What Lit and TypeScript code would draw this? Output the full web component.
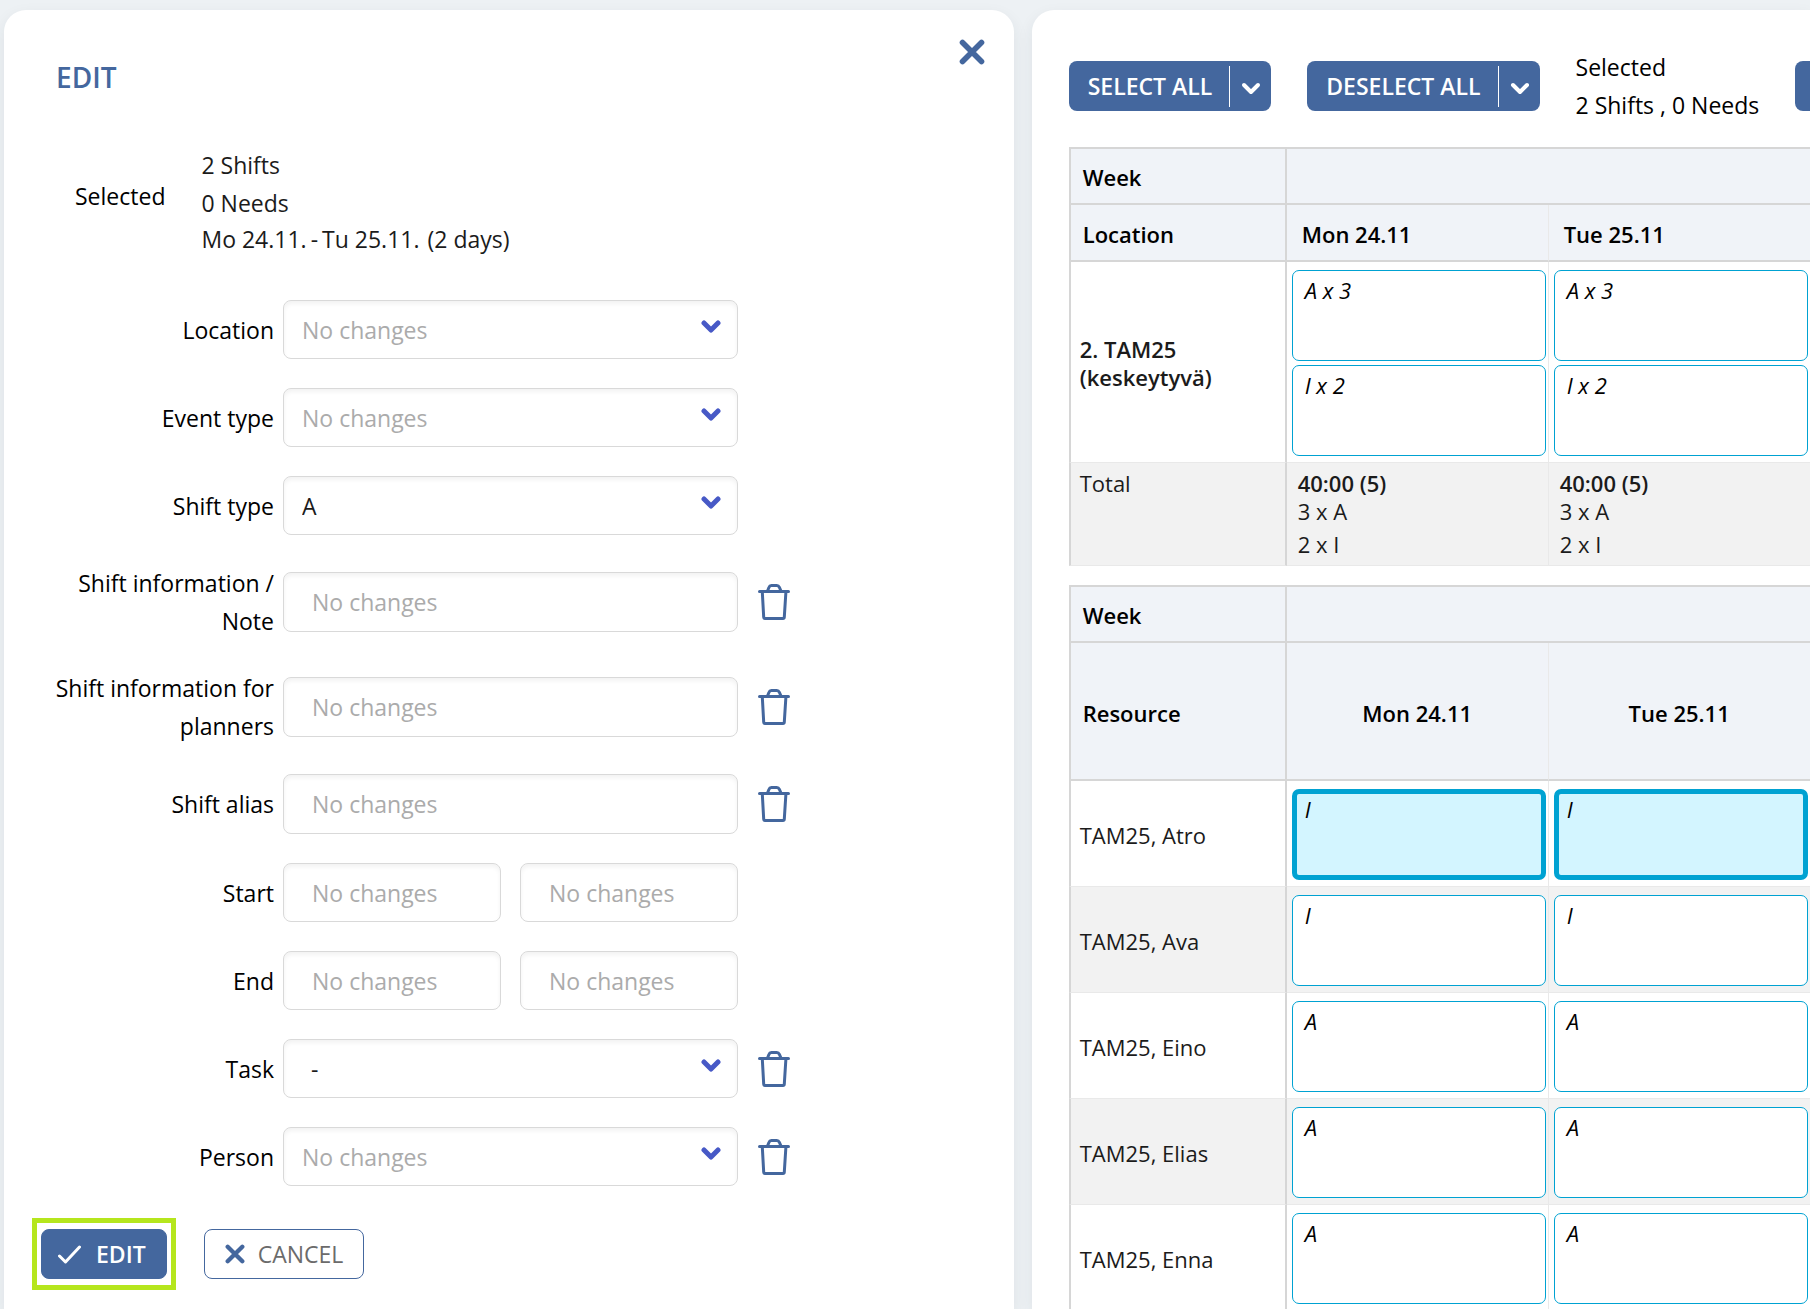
import { LitElement, html, css, nothing } from "lit";
import { customElement, property, state } from "lit/decorators.js";

const chevron = (cls: string) => html`
  <svg class=${cls} viewBox="0 0 20 13" aria-hidden="true">
    <path d="M3 3 L10 10 L17 3" fill="none" stroke="currentColor" stroke-linecap="round" stroke-linejoin="round" />
  </svg>
`;

const cross = (cls: string) => html`
  <svg class=${cls} viewBox="0 0 26 26" aria-hidden="true">
    <path d="M3.5 3.5 L22.5 22.5 M22.5 3.5 L3.5 22.5" fill="none" stroke="currentColor" stroke-width="5.6" stroke-linecap="round" />
  </svg>
`;

const trash = html`
  <svg class="trash-icon" viewBox="0 0 32 36" aria-hidden="true">
    <g fill="none" stroke="currentColor" stroke-width="3" stroke-linejoin="round" stroke-linecap="round">
      <path d="M1.5 7.5 H30.5" />
      <path d="M9.5 7 L11 3.2 Q11.6 1.5 13.4 1.5 H18.8 Q20.6 1.5 21.3 3.2 L23 7" />
      <path d="M4.3 8 L5.7 33.2 Q5.8 34.5 7 34.5 H25 Q26.2 34.5 26.3 33.2 L27.9 8" />
    </g>
  </svg>
`;

interface Field {
  id: string;
  label: string;
  kind: "select" | "text" | "pair";
  value?: string;
  indent?: boolean;
  clearable?: boolean;
}

const FIELDS: Field[] = [
  { id: "location", label: "Location", kind: "select" },
  { id: "event-type", label: "Event type", kind: "select" },
  { id: "shift-type", label: "Shift type", kind: "select", value: "A" },
  { id: "note", label: "Shift information / Note", kind: "text", clearable: true },
  { id: "planner-info", label: "Shift information for planners", kind: "text", clearable: true },
  { id: "alias", label: "Shift alias", kind: "text", clearable: true },
  { id: "start", label: "Start", kind: "pair" },
  { id: "end", label: "End", kind: "pair" },
  { id: "task", label: "Task", kind: "select", value: "-", indent: true, clearable: true },
  { id: "person", label: "Person", kind: "select", clearable: true },
];

const base = css`
  :host {
    --brand: #44679e;
    --line: #d6d6d6;
    --line-soft: #e9e9e9;
    --card: #00a2d2;
    display: block;
    font-family: "Open Sans", "Noto Sans", sans-serif;
    font-size: 23px;
    line-height: 38px;
    color: #1b1b1b;
  }
  * {
    box-sizing: border-box;
  }
  button,
  input,
  select {
    font: inherit;
    color: inherit;
    margin: 0;
  }
  button {
    cursor: pointer;
  }
`;

@customElement("shift-edit-form")
export class ShiftEditForm extends LitElement {
  static styles = [
    base,
    css`
      .head {
        display: flex;
        justify-content: space-between;
        align-items: flex-start;
        padding: 29px 29px 0 52px;
      }
      .title {
        margin: 18px 0 0;
        font-size: 28px;
        line-height: 40px;
        font-weight: 600;
        color: var(--brand);
      }
      .close {
        padding: 0;
        border: 0;
        background: none;
        color: var(--brand);
        line-height: 0;
      }
      .close-icon {
        width: 26px;
        height: 26px;
      }
      .summary {
        display: flex;
        gap: 36px;
        align-items: center;
        padding: 49px 0 0 71px;
      }
      .summary-label {
        padding-bottom: 10px;
        color: #000;
      }
      .summary-list {
        margin: 0;
        padding: 0;
        list-style: none;
      }
      .period {
        display: flex;
        gap: 4px;
        line-height: 34px;
      }
      .days {
        padding-left: 4px;
      }
      .form {
        padding: 44px 40px 0 40px;
      }
      .rows {
        display: flex;
        flex-direction: column;
        gap: 29px;
      }
      .row {
        display: grid;
        grid-template-columns: 239px minmax(0, 455px) 52px;
        align-items: center;
      }
      .label {
        padding-right: 9px;
        text-align: right;
        color: #000;
      }
      .control {
        width: 100%;
        height: 59px;
        padding: 0 28px;
        border: 1px solid #d9d9d9;
        border-radius: 8px;
        background: #fff;
        box-shadow: inset 0 3px 4px rgba(0, 0, 0, 0.05);
        appearance: none;
        outline-color: var(--brand);
      }
      .tall {
        height: 60px;
      }
      .control::placeholder {
        color: #ababab;
        opacity: 1;
      }
      .picker {
        display: grid;
        align-items: center;
      }
      .picker > * {
        grid-area: 1 / 1;
      }
      .select {
        padding: 0 48px 0 18px;
      }
      .indent {
        padding-left: 27px;
      }
      .empty {
        color: #ababab;
      }
      .picker-chevron {
        width: 20px;
        height: 13px;
        margin: 0 17px 6px 0;
        justify-self: end;
        color: #4759c6;
        stroke-width: 5;
        pointer-events: none;
      }
      .pair {
        display: grid;
        grid-template-columns: 1fr 1fr;
        gap: 19px;
      }
      .clear {
        justify-self: end;
        padding: 0;
        border: 0;
        background: none;
        color: var(--brand);
        line-height: 0;
      }
      .trash-icon {
        width: 32px;
        height: 36px;
      }
      .actions {
        display: flex;
        align-items: center;
        gap: 28px;
        padding: 32px 0 18px;
        margin-left: -12px;
      }
      .highlight {
        padding: 6px 4px;
        border: 5px solid #b5e61d;
      }
      .action {
        display: flex;
        align-items: center;
        height: 50px;
        border: 1px solid var(--brand);
        border-radius: 8px;
      }
      .primary {
        gap: 15px;
        padding: 0 20px 0 16px;
        background: var(--brand);
        color: #fff;
        font-weight: 600;
      }
      .secondary {
        gap: 13px;
        padding: 0 20px;
        background: #fff;
        color: #6b6b6b;
      }
      .check-icon {
        width: 23px;
        height: 19px;
      }
      .cancel-icon {
        width: 20px;
        height: 20px;
        color: var(--brand);
      }
    `,
  ];

  private renderControl(f: Field) {
    if (f.kind === "select") {
      return html`<div class="picker">
        <select id=${f.id} class="control select ${f.indent ? "indent" : ""} ${f.value ? "" : "empty"}">
          <option>${f.value ?? "No changes"}</option>
        </select>
        ${chevron("picker-chevron")}
      </div>`;
    }
    if (f.kind === "pair") {
      return html`<div class="pair">
        <input id=${f.id} class="control" placeholder="No changes" />
        <input class="control" placeholder="No changes" aria-label=${f.label} />
      </div>`;
    }
    return html`<input id=${f.id} class="control tall" placeholder="No changes" />`;
  }

  render() {
    return html`
      <header class="head">
        <h1 class="title">EDIT</h1>
        <button class="close" aria-label="Close">${cross("close-icon")}</button>
      </header>
      <section class="summary">
        <span class="summary-label">Selected</span>
        <ul class="summary-list">
          <li>2 Shifts</li>
          <li>0 Needs</li>
          <li class="period">
            <span>Mo 24.11.</span><span>-</span><span>Tu 25.11.</span><span class="days">(2 days)</span>
          </li>
        </ul>
      </section>
      <form class="form" @submit=${(e: Event) => e.preventDefault()}>
        <div class="rows">
          ${FIELDS.map(
            (f) => html`<div class="row">
              <label class="label" for=${f.id}>${f.label}</label>
              ${this.renderControl(f)}
              ${f.clearable
                ? html`<button type="button" class="clear" aria-label="Clear ${f.label}">${trash}</button>`
                : nothing}
            </div>`
          )}
        </div>
        <div class="actions">
          <div class="highlight">
            <button class="action primary">
              <svg class="check-icon" viewBox="0 0 23 19" aria-hidden="true">
                <path d="M1.5 11 L7.5 17 L21.5 2" fill="none" stroke="currentColor" stroke-width="3" stroke-linecap="round" stroke-linejoin="round" />
              </svg>
              EDIT
            </button>
          </div>
          <button type="button" class="action secondary">${cross("cancel-icon")} CANCEL</button>
        </div>
      </form>
    `;
  }
}

@customElement("split-button")
export class SplitButton extends LitElement {
  @property() label = "";

  static styles = [
    base,
    css`
      :host {
        flex: none;
      }
      .split {
        display: flex;
        align-items: center;
        height: 50px;
        border-radius: 8px;
        background: var(--brand);
        color: #fff;
      }
      .part {
        height: 100%;
        border: 0;
        background: none;
        font-weight: 600;
        white-space: nowrap;
      }
      .main {
        padding: 0 17px 0 19px;
      }
      .divider {
        width: 1px;
        height: 41px;
        background: #fff;
      }
      .more {
        padding: 0 10px 0 11px;
        line-height: 0;
      }
      .more-icon {
        width: 20px;
        height: 13px;
        margin-top: 4px;
        stroke-width: 4;
      }
    `,
  ];

  render() {
    return html`<div class="split">
      <button class="part main">${this.label}</button>
      <span class="divider"></span>
      <button class="part more" aria-label="${this.label} options">${chevron("more-icon")}</button>
    </div>`;
  }
}

@customElement("shift-board")
export class ShiftBoard extends LitElement {
  @state() private people = [
    { name: "TAM25, Atro", shift: "I", selected: true },
    { name: "TAM25, Ava", shift: "I", selected: false },
    { name: "TAM25, Eino", shift: "A", selected: false },
    { name: "TAM25, Elias", shift: "A", selected: false },
    { name: "TAM25, Enna", shift: "A", selected: false },
  ];

  private days = ["Mon 24.11", "Tue 25.11"];

  static styles = [
    base,
    css`
      :host {
        padding: 38px 0 0 37px;
      }
      .toolbar {
        display: flex;
        align-items: center;
        gap: 36px;
        margin-bottom: 23px;
      }
      .status {
        flex: none;
        color: #000;
      }
      .status-line {
        margin: 0;
        white-space: pre;
      }
      .extra {
        flex: none;
        width: 120px;
        height: 50px;
        border: 0;
        border-radius: 8px;
        background: var(--brand);
      }
      .grid {
        width: 742px;
        margin-bottom: 19px;
        table-layout: fixed;
        border-collapse: separate;
        border-spacing: 0;
        font-size: 22px;
        line-height: 28px;
      }
      .col-name {
        width: 218px;
      }
      .th {
        height: 57px;
        padding: 2px 0 0 15px;
        border-bottom: 2px solid var(--line);
        border-right: 1px solid var(--line-soft);
        background: #f0f3f8;
        color: #000;
        font-weight: 600;
        text-align: left;
      }
      .top {
        height: 58px;
        border-top: 2px solid var(--line);
      }
      .high {
        height: 138px;
        padding: 4px 0 0;
        text-align: center;
      }
      .name {
        padding: 2px 0 0 9px;
        border: solid var(--line);
        border-width: 0 2px;
        border-bottom: 1px solid var(--line-soft);
        font-weight: 400;
        text-align: left;
      }
      .th.name-head {
        padding-left: 12px;
        text-align: left;
        border-left: 2px solid var(--line);
        border-right: 2px solid var(--line);
      }
      .strong {
        font-weight: 600;
      }
      .cell {
        padding: 8px 2px 6px 5px;
        border-bottom: 1px solid var(--line-soft);
        border-right: 1px solid var(--line-soft);
      }
      .stack {
        display: flex;
        flex-direction: column;
        gap: 4px;
      }
      .shade {
        background: #f2f2f2;
      }
      .total {
        height: 103px;
        padding: 6px 0 0 11px;
        vertical-align: top;
      }
      .total.name {
        padding-left: 9px;
      }
      .count {
        margin: 0 0 5px;
      }
      .card {
        display: flex;
        align-items: flex-start;
        width: 100%;
        height: 91px;
        padding: 5px 12px;
        border: 1px solid var(--card);
        border-radius: 7px;
        background: #fff;
        color: #000;
        font-style: italic;
      }
      .picked {
        padding: 1px 8px;
        border-width: 5px;
        background: #d3f5ff;
      }
    `,
  ];

  private toggle(i: number) {
    this.people = this.people.map((p, n) => (n === i ? { ...p, selected: !p.selected } : p));
  }

  private renderHead(title: string, high: boolean) {
    return html`
      <colgroup>
        <col class="col-name" />
        <col />
        <col />
      </colgroup>
      <thead>
        <tr>
          <th class="th top name-head" scope="row">Week</th>
          <td class="th top" colspan="2"></td>
        </tr>
        <tr>
          <th class="th name-head ${high ? "high" : ""}" scope="col">${title}</th>
          ${this.days.map((d) => html`<th class="th ${high ? "high" : ""}" scope="col">${d}</th>`)}
        </tr>
      </thead>
    `;
  }

  render() {
    return html`
      <div class="toolbar">
        <split-button label="SELECT ALL"></split-button>
        <split-button label="DESELECT ALL"></split-button>
        <div class="status">
          <p class="status-line">Selected</p>
          <p class="status-line">2 Shifts , 0 Needs</p>
        </div>
        <button class="extra" aria-label="More"></button>
      </div>

      <table class="grid">
        ${this.renderHead("Location", false)}
        <tbody>
          <tr>
            <th class="name strong" scope="row">2. TAM25<br />(keskeytyvä)</th>
            ${this.days.map(
              () => html`<td class="cell">
                <div class="stack">
                  <button class="card">A x 3</button>
                  <button class="card">I x 2</button>
                </div>
              </td>`
            )}
          </tr>
          <tr class="shade">
            <th class="name total" scope="row">Total</th>
            ${this.days.map(
              () => html`<td class="cell total">
                <div class="strong">40:00 (5)</div>
                <p class="count">3 x A</p>
                <p class="count">2 x I</p>
              </td>`
            )}
          </tr>
        </tbody>
      </table>

      <table class="grid">
        ${this.renderHead("Resource", true)}
        <tbody>
          ${this.people.map(
            (p, i) => html`<tr class=${i % 2 ? "shade" : ""}>
              <th class="name" scope="row">${p.name}</th>
              ${this.days.map(
                () => html`<td class="cell">
                  <button
                    class="card ${p.selected ? "picked" : ""}"
                    aria-pressed=${p.selected ? "true" : "false"}
                    @click=${() => this.toggle(i)}
                  >
                    ${p.shift}
                  </button>
                </td>`
              )}
            </tr>`
          )}
        </tbody>
      </table>
    `;
  }
}

@customElement("app-root")
export class AppRoot extends LitElement {
  static styles = css`
    :host {
      display: block;
      background: #edf1f4;
    }
    .page {
      display: grid;
      grid-template-columns: minmax(0, 48fr) minmax(0, 37fr);
      gap: 18px;
      box-sizing: border-box;
      height: 100vh;
      padding: 10px 0 0 4px;
      overflow: hidden;
    }
    .panel {
      min-height: 100%;
      overflow: hidden;
      border-radius: 22px 22px 0 0;
      background: #fff;
      box-shadow: 0 6px 16px rgba(40, 50, 60, 0.08);
    }
    .flush {
      border-top-right-radius: 0;
    }
  `;

  render() {
    return html`<main class="page">
      <section class="panel"><shift-edit-form></shift-edit-form></section>
      <section class="panel flush"><shift-board></shift-board></section>
    </main>`;
  }
}
